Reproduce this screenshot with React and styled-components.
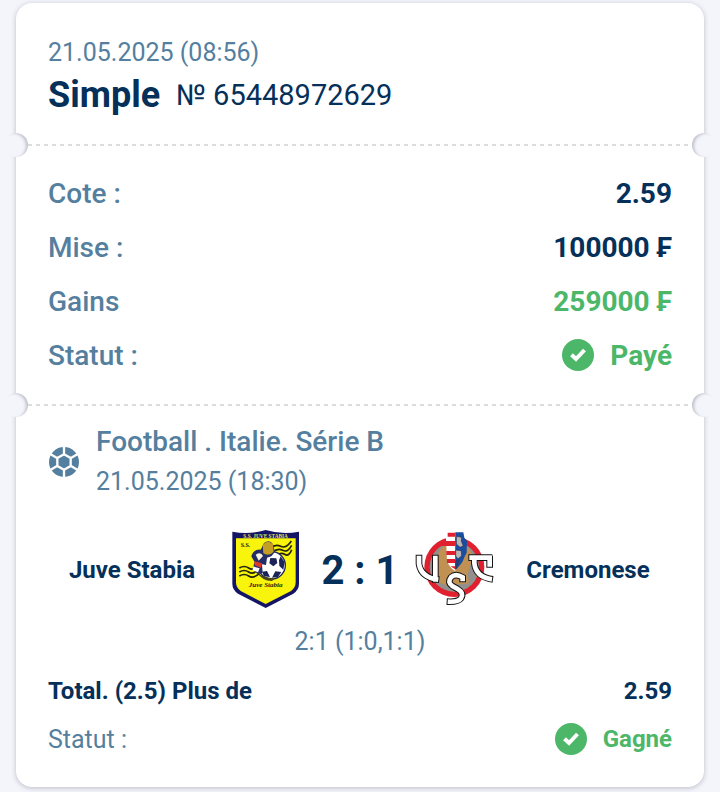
import styled, { createGlobalStyle, ThemeProvider } from "styled-components"

const theme = {
    colors: {
        page: '#f4f5fb',
        card: '#ffffff',
        main: '#05305a',
        muted: '#557f9e',
        success: '#4cb769',
        line: '#dadce0',
    },
}

const GlobalStyle = createGlobalStyle`
    * {
        box-sizing: border-box;
    }

    body {
        margin: 0;
        background: ${theme.colors.page};
        font-family: Roboto, "Liberation Sans", sans-serif;
    }
`

const CheckIcon = () => (
    <CheckSvg viewBox="0 0 32 32" aria-hidden="true">
        <circle cx="16" cy="16" r="16" />
        <path d="M9.5 15.7 14 20 22.5 11" />
    </CheckSvg>
)

const BallIcon = () => (
    <BallSvg viewBox="24 27 96 96" aria-hidden="true">
        <circle cx="72" cy="75" r="45" fill="#557f9e" />
        <g fill="none" stroke="#fff" strokeWidth="7">
            <path d="M72 52 92 63V87L72 98 52 87V63Z" />
            <path d="M72 51V28M93 63 113 51M93 87 113 99M72 99V122M51 87 31 99M51 63 31 51" />
        </g>
    </BallSvg>
)

const JuveStabiaLogo = () => (
    <LogoSvg viewBox="12 27 240 240" role="img" aria-label="Juve Stabia">
        <path d="M31 32Q82 42 131 27 180 42 231 32V188Q231 206 214 218L131 261 48 218Q31 206 31 188Z" fill="#151566" />
        <path d="M42 52H221V184Q221 200 207 210L131 249 56 210Q42 200 42 184Z" fill="#f9f40c" />
        <text x="131" y="50" textAnchor="middle" fontFamily="Liberation Serif, serif" fontWeight="bold" fontSize="16" fill="#e8df62">S.S. JUVE STABIA</text>
        <text x="56" y="77" fontFamily="Liberation Serif, serif" fontWeight="bold" fontSize="18" fill="#1a1a16">S.S.</text>
        <g fill="none" stroke="#24230f" strokeWidth="5">
            <path d="M145 82Q160 68 176 76T208 60" />
            <path d="M152 94Q167 80 182 88T209 73" />
            <path d="M160 106Q175 92 188 100T209 86" />
            <path d="M52 141Q67 132 80 141T106 134" />
            <path d="M52 153Q67 144 80 153T110 146" />
            <path d="M52 165Q67 156 80 165T112 158" />
        </g>
        <circle cx="149" cy="133" r="41" fill="#fff" stroke="#20285f" strokeWidth="4" />
        <path d="M145 111 163 112 166 126 154 136 142 127ZM176 106 188 124 184 146 172 135 171 118ZM120 152 135 150 144 168 126 166ZM160 151 178 153 168 168 150 170Z" fill="#1c2455" />
        <path d="M88 106Q94 84 116 86L126 66Q143 54 153 70L159 92 148 106 135 110 132 132 120 130 122 156 107 160 92 142 98 124Z" fill="#252d68" />
        <path d="M122 72Q138 53 153 70L155 92Q141 108 124 97Z" fill="#c59e24" />
        <path d="M101 101Q117 91 123 105L110 119Z" fill="#f7f5db" />
        <path d="M97 120 120 127 117 140 98 133Z" fill="#df3928" />
        <path d="M93 136 113 142 108 154 92 148Z" fill="#fff" />
        <path d="M104 152Q124 172 160 171L150 180Q120 180 104 152Z" fill="#4a4718" />
        <text x="131" y="198" textAnchor="middle" fontFamily="Liberation Serif, serif" fontWeight="bold" fontStyle="italic" fontSize="21" fill="#25230b">Juve Stabia</text>
    </LogoSvg>
)

const CremoneseLogo = () => (
    <LogoSvg viewBox="15 21 240 240" role="img" aria-label="Cremonese">
        <circle cx="136" cy="132" r="90" fill="#e0202f" />
        <circle cx="136" cy="132" r="74" fill="#928f8c" />
        <path d="M104 69Q80 90 84 124L79 174 116 188 180 181 176 153 184 126 196 104 174 69Z" fill="#c09152" />
        <path d="M110 28H139V145Q120 134 114 112Z" fill="#fff" />
        <path d="M116 29H139V41H116ZM98 54H139V69H98ZM112 84H139V96H112ZM114 108H139V120H114ZM124 130H139V139Z" fill="#e0202f" />
        <path d="M139 28H163L166 44 174 54 173 89 166 103Q159 126 139 139Z" fill="#194da0" />
        <path d="M142 40 158 43 157 54 163 69 153 73 142 63ZM140 81 157 83 158 98 147 108 140 99Z" fill="#b9b5b5" stroke="#243254" strokeWidth="2" />
        <path d="M139 112 152 109 145 136 139 140Z" fill="#263f71" />
        <g fill="none">
            <g stroke="#161616" strokeWidth="20">
                <path d="M30 95V122Q36 164 91 170M79 95V179" />
                <path d="M161 178V163Q140 150 126 163 114 178 130 189L146 198Q166 210 156 226 147 238 113 236" />
                <path d="M178 104H250M242 98V134M196 102V120Q200 162 252 169" />
            </g>
            <g stroke="#fff" strokeWidth="14">
                <path d="M30 98V122Q36 164 88 170M79 98V176" />
                <path d="M161 175V163Q140 150 126 163 114 178 130 189L146 198Q166 210 156 226 147 238 116 236" />
                <path d="M181 104H249M242 98V131M196 102V120Q200 162 249 169" />
            </g>
        </g>
    </LogoSvg>
)

export default function App() {
    return (
        <ThemeProvider theme={theme}>
            <GlobalStyle />
            <Page>
                <Ticket>
                    <Header>
                        <DateText>21.05.2025 (08:56)</DateText>
                        <TitleRow>
                            <Title>Simple</Title>
                            <TicketNumber>№ 65448972629</TicketNumber>
                        </TitleRow>
                    </Header>

                    <Divider />

                    <Summary>
                        <SummaryRow>
                            <Label>Cote :</Label>
                            <Value>2.59</Value>
                        </SummaryRow>
                        <SummaryRow>
                            <Label>Mise :</Label>
                            <Value>100000 ₣</Value>
                        </SummaryRow>
                        <SummaryRow>
                            <Label>Gains</Label>
                            <Value $success>259000 ₣</Value>
                        </SummaryRow>
                        <SummaryRow>
                            <Label>Statut :</Label>
                            <Value $success><CheckIcon />Payé</Value>
                        </SummaryRow>
                    </Summary>

                    <Divider />

                    <Event>
                        <EventHeader>
                            <BallIcon />
                            <div>
                                <League>Football . Italie. Série B</League>
                                <EventDate>21.05.2025 (18:30)</EventDate>
                            </div>
                        </EventHeader>

                        <Match>
                            <Team>Juve Stabia</Team>
                            <JuveStabiaLogo />
                            <Score>2 : 1</Score>
                            <CremoneseLogo />
                            <Team>Cremonese</Team>
                        </Match>
                        <Periods>2:1 (1:0,1:1)</Periods>

                        <BetRow>
                            <BetName>Total. (2.5) Plus de</BetName>
                            <Value>2.59</Value>
                        </BetRow>
                        <BetRow>
                            <BetLabel>Statut :</BetLabel>
                            <Value $success><CheckIcon />Gagné</Value>
                        </BetRow>
                    </Event>
                </Ticket>
            </Page>
        </ThemeProvider>
    )
}

const Page = styled.main`
    padding: 3px 16px 5px;
`

const Ticket = styled.article`
    background: ${({ theme }) => theme.colors.card};
    border-radius: 16px;
    box-shadow: 0 1px 5px rgba(40, 40, 60, 0.28);
`

const Header = styled.header`
    padding: 36px 32px 27px;
`

const DateText = styled.div`
    color: ${({ theme }) => theme.colors.muted};
    font-size: 25px;
    line-height: 28px;
`

const TitleRow = styled.div`
    display: flex;
    align-items: center;
    gap: 16px;
    margin-top: 6px;
    line-height: 44px;
    color: ${({ theme }) => theme.colors.main};
`

const Title = styled.h1`
    margin: 0;
    font-size: 36px;
    font-weight: 700;
`

const TicketNumber = styled.span`
    font-size: 29px;
`

const Divider = styled.div`
    position: relative;
    height: 2px;
    margin: 0 12px;
    background: repeating-linear-gradient(90deg, ${({ theme }) => theme.colors.line} 0 4px, transparent 4px 8px);

    &::before,
    &::after {
        content: '';
        position: absolute;
        top: -11px;
        width: 24px;
        height: 24px;
        border-radius: 50%;
        background: ${({ theme }) => theme.colors.page};
    }

    &::before {
        left: -24px;
        box-shadow: inset -3px 1px 3px -1px rgba(40, 40, 60, 0.25);
    }

    &::after {
        right: -24px;
        box-shadow: inset 3px 1px 3px -1px rgba(40, 40, 60, 0.25);
    }
`

const Summary = styled.section`
    padding: 20px 32px 22px;
`

const SummaryRow = styled.div`
    display: flex;
    align-items: center;
    justify-content: space-between;
    height: 54px;
    font-size: 28px;
`

const Label = styled.span`
    color: ${({ theme }) => theme.colors.muted};
    font-weight: 500;
`

const Value = styled.span`
    display: flex;
    align-items: center;
    gap: 16px;
    color: ${({ theme, $success }) => $success ? theme.colors.success : theme.colors.main};
    font-weight: 700;
`

const CheckSvg = styled.svg`
    width: 32px;
    height: 32px;
    fill: ${({ theme }) => theme.colors.success};

    path {
        fill: none;
        stroke: #fff;
        stroke-width: 4;
    }
`

const Event = styled.section`
    padding: 16px 32px 24px;
`

const EventHeader = styled.div`
    display: flex;
    align-items: center;
    gap: 16px;
    line-height: 40px;
    color: ${({ theme }) => theme.colors.muted};
`

const BallSvg = styled.svg`
    width: 32px;
    height: 32px;
`

const League = styled.div`
    font-size: 28px;
    font-weight: 500;
`

const EventDate = styled.div`
    font-size: 25px;
`

const Match = styled.div`
    display: grid;
    grid-template-columns: 1fr 80px 88px 80px 1fr;
    align-items: center;
    gap: 10px;
    margin-top: 28px;
    color: ${({ theme }) => theme.colors.main};
    text-align: center;
`

const Team = styled.div`
    font-size: 24px;
    font-weight: 700;
`

const LogoSvg = styled.svg`
    width: 80px;
    height: 80px;
`

const Score = styled.div`
    font-size: 40px;
    font-weight: 700;
    white-space: nowrap;
`

const Periods = styled.div`
    margin: 16px 0 9px;
    color: ${({ theme }) => theme.colors.muted};
    font-size: 25px;
    line-height: 32px;
    text-align: center;
`

const BetRow = styled.div`
    display: flex;
    align-items: center;
    justify-content: space-between;
    height: 48px;
    font-size: 24px;
`

const BetName = styled.span`
    color: ${({ theme }) => theme.colors.main};
    font-weight: 700;
`

const BetLabel = styled.span`
    color: ${({ theme }) => theme.colors.muted};
    font-size: 25px;
`
